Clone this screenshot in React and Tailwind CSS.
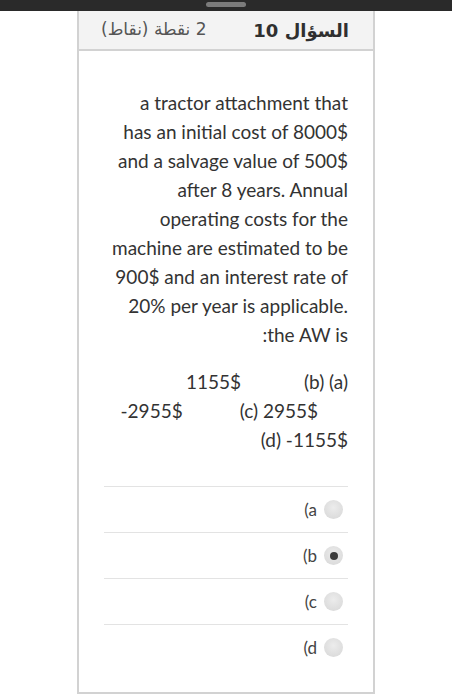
import React from "react";

const latoFont = { fontFamily: "Lato, 'Open Sans', sans-serif" };

function Radio({ checked }) {
    return (
        <span className="flex h-[19px] w-[19px] items-center justify-center rounded-full bg-[radial-gradient(circle_at_50%_40%,#ececec,#d6d6d6)]">
            {checked && <span className="h-[8px] w-[8px] rounded-full bg-[#3c3c3c]" />}
        </span>
    );
}

export default function App() {
    const lines = [
        "a tractor attachment that",
        "has an initial cost of 8000$",
        "and a salvage value of 500$",
        "after 8 years. Annual",
        "operating costs for the",
        "machine are estimated to be",
        "900$ and an interest rate of",
        "20% per year is applicable.",
        ":the AW is",
    ];
    const answers = [
        { label: "(a", checked: false },
        { label: "(b", checked: true },
        { label: "(c", checked: false },
        { label: "(d", checked: false },
    ];

    return (
        <div className="min-h-[700px] w-[452px] bg-white" style={latoFont}>
            <div className="flex h-[11px] justify-center bg-[#2a2a2a]">
                <div className="mt-[2px] h-[5px] w-[40px] rounded-full bg-[#7b7b7b]" />
            </div>
            <div className="ml-[77px] flex h-[683px] w-[298px] flex-col border-x-2 border-b-2 border-[#d2d2d2]">
                <div
                    dir="rtl"
                    className="flex h-[40px] items-center justify-between border-b-2 border-[#d2d2d2] bg-[#f3f3f3] pl-[22px] pr-[24px]"
                    style={{ fontFamily: "'DejaVu Sans', 'Noto Sans', sans-serif" }}
                >
                    <span className="text-[18px] font-semibold text-[#2f2f2f]">السؤال 10</span>
                    <span className="text-[17px] text-[#555]">2 نقطة (نقاط)</span>
                </div>
                <div className="px-[25px] pt-[37px] text-right text-[19px] leading-[29px] text-[#333]">
                    {lines.map((l) => (
                        <div key={l}>{l}</div>
                    ))}
                    <div className="mt-[18px] flex justify-end gap-[63px]">
                        <span>1155$</span>
                        <span>(b) (a)</span>
                    </div>
                    <div className="flex justify-end gap-[57px] pr-[30px]">
                        <span>-2955$</span>
                        <span>(c) 2955$</span>
                    </div>
                    <div>(d) -1155$</div>
                </div>
                <div className="mx-[25px] mt-[32px]">
                    {answers.map((a) => (
                        <div
                            key={a.label}
                            className="flex h-[46px] items-center justify-end gap-[7px] border-t border-[#e3e3e3] pr-[5px] text-[17px] text-[#444]"
                        >
                            <span>{a.label}</span>
                            <Radio checked={a.checked} />
                        </div>
                    ))}
                </div>
            </div>
        </div>
    );
}
